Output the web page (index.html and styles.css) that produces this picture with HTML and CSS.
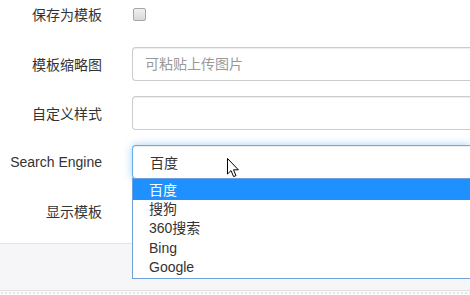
FILE: index.html
```html
<!DOCTYPE html>
<html lang="zh-CN">
<head>
  <meta charset="UTF-8">
  <title>模板设置</title>
  <link rel="stylesheet" href="styles.css">
</head>
<body>
  <div class="form">
    <div class="row row-check">
      <label class="lbl">保存为模板</label>
      <div class="ctl"><span class="checkbox"></span></div>
    </div>
    <div class="row">
      <label class="lbl">模板缩略图</label>
      <div class="ctl"><input class="field" type="text" placeholder="可粘贴上传图片"></div>
    </div>
    <div class="row">
      <label class="lbl">自定义样式</label>
      <div class="ctl"><input class="field" type="text"></div>
    </div>
    <div class="row">
      <label class="lbl">Search Engine</label>
      <div class="ctl select-wrap">
        <div class="field select">百度</div>
        <ul class="dropdown">
          <li class="active">百度</li>
          <li>搜狗</li>
          <li>360搜索</li>
          <li>Bing</li>
          <li>Google</li>
        </ul>
        <svg class="cursor" width="13" height="20" viewBox="0 0 13 20">
          <path d="M0.5 0.5 L0.5 16 L4 12.6 L6.6 18.6 L9 17.6 L6.5 11.8 L11.4 11.8 Z" fill="#fff" stroke="#000" stroke-width="1" stroke-linejoin="miter"/>
        </svg>
      </div>
    </div>
    <div class="row">
      <label class="lbl">显示模板</label>
      <div class="ctl"></div>
    </div>
  </div>
  <div class="actions"></div>
  <div class="dots"></div>
</body>
</html>
```

FILE: styles.css
```css
body {
  margin: 0;
  font-family: "Liberation Sans", "Noto Sans CJK SC", sans-serif;
  font-size: 14px;
  color: #333;
  background: #fff;
  overflow: hidden;
  width: 470px;
  height: 295px;
}

.row {
  display: grid;
  grid-template-columns: 102px 1fr;
  column-gap: 30px;
  height: 34px;
  margin-bottom: 15px;
}
.row-check {
  height: 28px;
  margin-bottom: 19px;
}

.lbl {
  display: flex;
  align-items: center;
  justify-content: flex-end;
  white-space: nowrap;
}

.ctl {
  display: flex;
  align-items: center;
  min-width: 0;
}

.checkbox {
  display: block;
  width: 11px;
  height: 11px;
  margin-left: 1px;
  border: 1px solid #a6a6a6;
  border-radius: 2px;
  background: linear-gradient(#f0f0f0, #d9d9d9);
}

/* the fields continue past the right edge of the frame */
.field {
  box-sizing: border-box;
  width: 100%;
  height: 34px;
  padding: 6px 12px;
  border: 1px solid #ccc;
  border-right: none;
  border-radius: 4px 0 0 4px;
  font: inherit;
  color: #555;
  background: #fff;
  box-shadow: inset 0 1px 1px rgba(0, 0, 0, .075);
}
.field::placeholder {
  color: #999;
}

.select-wrap {
  position: relative;
}
.select {
  display: flex;
  align-items: center;
  padding-left: 17px;
  color: #333;
  border-color: #66afe9;
  box-shadow: inset 0 1px 1px rgba(0, 0, 0, .075), 0 0 8px rgba(102, 175, 233, .6);
}

.dropdown {
  position: absolute;
  left: 0;
  right: 0;
  top: 33px;
  margin: 0;
  padding: 0;
  list-style: none;
  background: #fff;
  border: 1px solid #6d9fdc;
  border-right: none;
  z-index: 2;
}
.dropdown li {
  height: 19.4px;
  line-height: 19px;
  padding-left: 16px;
  color: #333;
}
.dropdown li.active {
  background: #1e90ff;
  color: #fff;
  height: 21px;
  line-height: 22px;
}

.cursor {
  position: absolute;
  left: 95px;
  top: 13px;
  z-index: 3;
}

.actions {
  height: 46px;
  background: #f6f6f8;
  border-top: 1px solid #e5e5e5;
  border-bottom: 1px solid #e2e2e2;
}

.dots {
  height: 6px;
  background-color: #fbfbfb;
  background-image: radial-gradient(#e6e6e6 0.8px, transparent 1px);
  background-size: 4px 4px;
}
```
